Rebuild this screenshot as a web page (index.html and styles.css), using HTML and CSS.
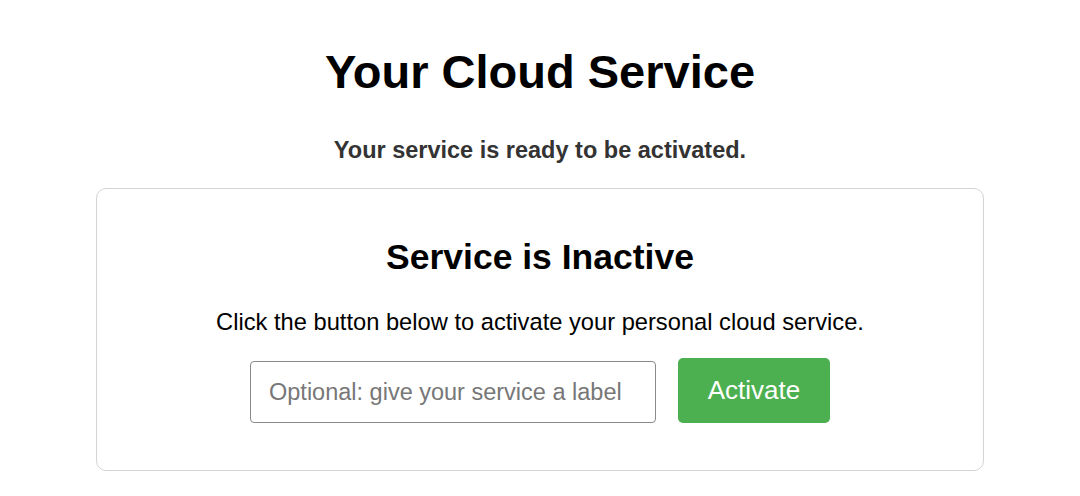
FILE: index.html
```html
<!DOCTYPE html>
<html lang="en">
<head>
<meta charset="utf-8">
<title>Your Cloud Service</title>
<link rel="stylesheet" href="styles.css">
</head>
<body>
<main class="page">
  <h1 class="title">Your Cloud Service</h1>
  <p class="subtitle">Your service is ready to be activated.</p>
  <section class="card">
    <h2 class="card-title">Service is Inactive</h2>
    <p class="card-text">Click the button below to activate your personal cloud service.</p>
    <form class="row">
      <input class="label-input" type="text" placeholder="Optional: give your service a label">
      <button class="activate" type="button">Activate</button>
    </form>
  </section>
</main>
</body>
</html>
```
FILE: styles.css
```css
* { box-sizing: border-box; }
html, body { margin: 0; padding: 0; background: #fff; }
body {
  font-family: "Liberation Sans", Arial, Helvetica, sans-serif;
  color: #000;
}
.page {
  display: flex;
  flex-direction: column;
  align-items: center;
  padding-top: 44px;
}
.title {
  margin: 0;
  font-size: 47px;
  line-height: 56px;
  font-weight: 700;
}
.subtitle {
  margin: 36px 0 0;
  font-size: 23.5px;
  line-height: 28px;
  font-weight: 700;
  color: #333;
}
.card {
  margin-top: 24px;
  width: 888px;
  height: 283px;
  border: 1px solid #d4d4d4;
  border-radius: 10px;
  padding: 48px 0 0;
  display: flex;
  flex-direction: column;
  align-items: center;
}
.card-title {
  margin: 0;
  font-size: 35.5px;
  line-height: 40px;
  font-weight: 700;
}
.card-text {
  margin: 31px 0 0;
  font-size: 23.7px;
  line-height: 28px;
}
.row {
  margin: 22px 0 0;
  display: flex;
  align-items: flex-end;
  gap: 22px;
}
.label-input {
  width: 406px;
  height: 62px;
  border: 1.5px solid #8a8a8a;
  border-radius: 4px;
  padding: 0 18px;
  font-family: inherit;
  font-size: 23.5px;
  color: #333;
  background: #fff;
}
.label-input::placeholder { color: #777; }
.activate {
  width: 152px;
  height: 65px;
  border: none;
  border-radius: 5px;
  background: #4caf50;
  color: #fff;
  font-family: inherit;
  font-size: 26px;
  cursor: pointer;
}
```
